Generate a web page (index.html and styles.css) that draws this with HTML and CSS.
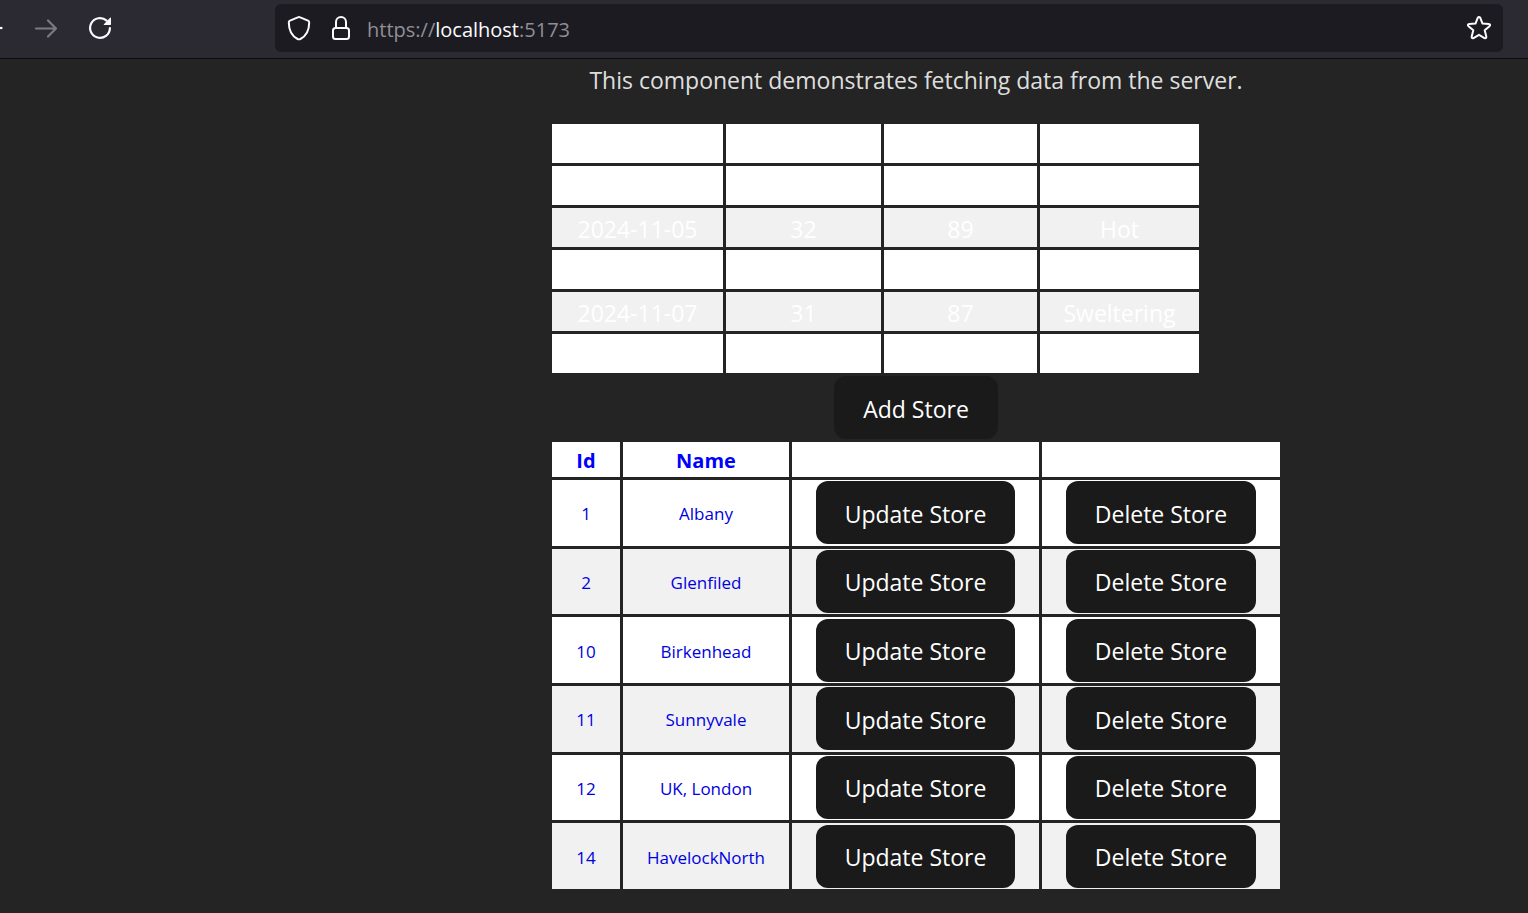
FILE: index.html
```html
<!DOCTYPE html>
<html lang="en">
<head>
<meta charset="utf-8">
<title>Stores</title>
<link rel="stylesheet" href="styles.css">
</head>
<body>
<header class="toolbar">
  <nav class="nav" aria-label="Browser navigation">
    <button class="icon-btn back" type="button" aria-label="Back"><svg width="3" height="24" viewBox="0 0 3 24"><path d="M0 12H2.4" stroke="#fbfbfe" stroke-width="2.2"/></svg></button>
    <button class="icon-btn forward" type="button" aria-label="Forward"><svg width="24" height="24" viewBox="0 0 24 24" fill="none" stroke="#7b7a83" stroke-width="2.2" stroke-linecap="round" stroke-linejoin="round"><path d="M2 12.5H22M14 4.5L22 12.5L14 20.5"/></svg></button>
    <button class="icon-btn reload" type="button" aria-label="Reload"><svg width="24" height="24" viewBox="0 0 24 24" fill="none"><path d="M21.9 12.2A9.9 9.9 0 1 1 18.6 4.6" stroke="#fbfbfe" stroke-width="2.2" stroke-linecap="round"/><path d="M22.3 1.6Q23 1.4 23 2.2V8.2Q23 9 22.2 9H16.2Q15.2 9 15.9 8.2Z" fill="#fbfbfe"/></svg></button>
  </nav>
  <div class="address">
    <button class="icon-btn" type="button" aria-label="Tracking protection"><svg width="24" height="26" viewBox="0 0 24 26" fill="none" stroke="#fbfbfe" stroke-width="2" stroke-linejoin="round"><path d="M12 2Q12.6 2 13.2 2.3L21 5.6Q22.200 6.100 22.200 7.400C22.200 14 19.600 20.600 13.400 24Q12 24.700 10.600 24C4.400 20.600 1.800 14 1.800 7.400Q1.800 6.100 3 5.600L10.800 2.300Q11.400 2 12 2Z"/></svg></button>
    <button class="icon-btn" type="button" aria-label="Site information"><svg width="20" height="26" viewBox="0 0 20 26" fill="none" stroke="#fbfbfe" stroke-width="2"><rect x="2" y="13" width="16" height="11" rx="2.500"/><path d="M5 13V7a5 5 0 0 1 10 0V13"/></svg></button>
    <div class="url" role="textbox" aria-label="Address" contenteditable="true" spellcheck="false">https://<span class="host">localhost</span>:5173</div>
    <button class="icon-btn" type="button" aria-label="Bookmark"><svg width="26" height="26" viewBox="0 0 26 26" fill="none" stroke="#fbfbfe" stroke-width="2" stroke-linejoin="round"><path d="M11.700 2.900Q13 1 14.300 2.900L16.500 8.600L22.800 9Q25 9.400 23.500 11.200L18.700 15.300L20.300 21.500Q20.500 23.700 18.500 23.100L13 19.800L7.500 23.100Q5.500 23.700 5.700 21.500L7.300 15.300L2.500 11.200Q1 9.400 3.200 9L9.500 8.600Z"/></svg></button>
  </div>
</header>
<main class="page">
  <div class="content">
    <p class="intro">This component demonstrates fetching data from the server.</p>
    <table class="grid weather" aria-label="Weather forecast">
      <colgroup><col class="w-date"><col class="w-c"><col class="w-f"><col class="w-sum"></colgroup>
      <thead><tr><th></th><th></th><th></th><th></th></tr></thead>
      <tbody>
        <tr><td></td><td></td><td></td><td></td></tr>
        <tr><td>2024-11-05</td><td>32</td><td>89</td><td>Hot</td></tr>
        <tr><td></td><td></td><td></td><td></td></tr>
        <tr><td>2024-11-07</td><td>31</td><td>87</td><td>Sweltering</td></tr>
        <tr><td></td><td></td><td></td><td></td></tr>
      </tbody>
    </table>
    <button class="btn add" type="button">Add Store</button>
    <table class="grid stores" aria-label="Stores">
      <colgroup><col class="s-id"><col class="s-name"><col class="s-update"><col class="s-delete"></colgroup>
      <thead><tr><th>Id</th><th>Name</th><th></th><th></th></tr></thead>
      <tbody>
        <tr><td>1</td><td>Albany</td><td><button class="btn" type="button">Update Store</button></td><td><button class="btn" type="button">Delete Store</button></td></tr>
        <tr><td>2</td><td>Glenfiled</td><td><button class="btn" type="button">Update Store</button></td><td><button class="btn" type="button">Delete Store</button></td></tr>
        <tr><td>10</td><td>Birkenhead</td><td><button class="btn" type="button">Update Store</button></td><td><button class="btn" type="button">Delete Store</button></td></tr>
        <tr><td>11</td><td>Sunnyvale</td><td><button class="btn" type="button">Update Store</button></td><td><button class="btn" type="button">Delete Store</button></td></tr>
        <tr><td>12</td><td>UK, London</td><td><button class="btn" type="button">Update Store</button></td><td><button class="btn" type="button">Delete Store</button></td></tr>
        <tr><td>14</td><td>HavelockNorth</td><td><button class="btn" type="button">Update Store</button></td><td><button class="btn" type="button">Delete Store</button></td></tr>
      </tbody>
    </table>
  </div>
</main>
</body>
</html>
```
FILE: styles.css
```css
* { box-sizing: border-box; }
body {
  margin: 0;
  background: #242424;
  color: rgba(255, 255, 255, 0.87);
  font-family: "Open Sans", "Noto Sans", sans-serif;
  font-size: 23px;
  line-height: 36px;
}

/* Browser toolbar */
.toolbar {
  display: flex;
  align-items: center;
  padding: 4px 25px 6px 0;
  background: #2b2a33;
  border-bottom: 1px solid #0c0c0d;
}
.nav { display: flex; align-items: center; width: 275px; flex: none; }
.icon-btn {
  flex: none;
  padding: 0;
  border: 0;
  background: none;
  line-height: 0;
}
.forward { margin-left: 31px; }
.reload { margin-left: 30px; }
.address {
  display: flex;
  align-items: center;
  gap: 20px;
  flex: 1;
  height: 48px;
  padding: 0 11px 0 12px;
  border-radius: 6px;
  background: #1c1b22;
}
.url {
  flex: 1;
  margin-left: -4px;
  padding-top: 4px;
  color: #8f8f97;
  font-size: 20px;
  line-height: 32px;
  outline: none;
}
.host { color: #fbfbfe; }

/* Page */
.page { padding: 3px 0 20px 304px; }
.content {
  width: 734px;
  max-width: 100%;
  margin: 0 auto;
}
.intro { margin: 0 0 23px; text-align: center; }

.grid {
  table-layout: fixed;
  border-collapse: separate;
  border-spacing: 3px;
  text-align: center;
}
.grid tr { background: #fff; }
.grid tbody tr:nth-child(even) { background: #f1f1f1; }

.weather { width: 653px; color: #fff; }
.weather th, .weather td { height: 39px; padding: 3px 0 0; }
.w-date { width: 171px; }
.w-c { width: 155px; }
.w-f { width: 153px; }
.w-sum { width: 159px; }

.stores { width: 734px; height: 453px; color: #0000e0; font-size: 17px; }
.stores th { height: 35px; padding: 2px 0 0; color: #00f; font-size: 20px; line-height: 32px; }
.stores td { padding: 1px 24px; }
.stores td:nth-child(-n+2) { padding: 3px 0 0; }
.s-id { width: 68px; }
.s-name { width: 166px; }
.s-update { width: 247px; }
.s-delete { width: 238px; }

.btn {
  display: block;
  width: 100%;
  height: 63px;
  padding: 2px 0 0;
  border: 0;
  border-radius: 12px;
  background: #1a1a1a;
  color: #fff;
  font: inherit;
  font-size: 23px;
  line-height: 36px;
}
.add { width: 164px; margin: 0 auto; }
```
